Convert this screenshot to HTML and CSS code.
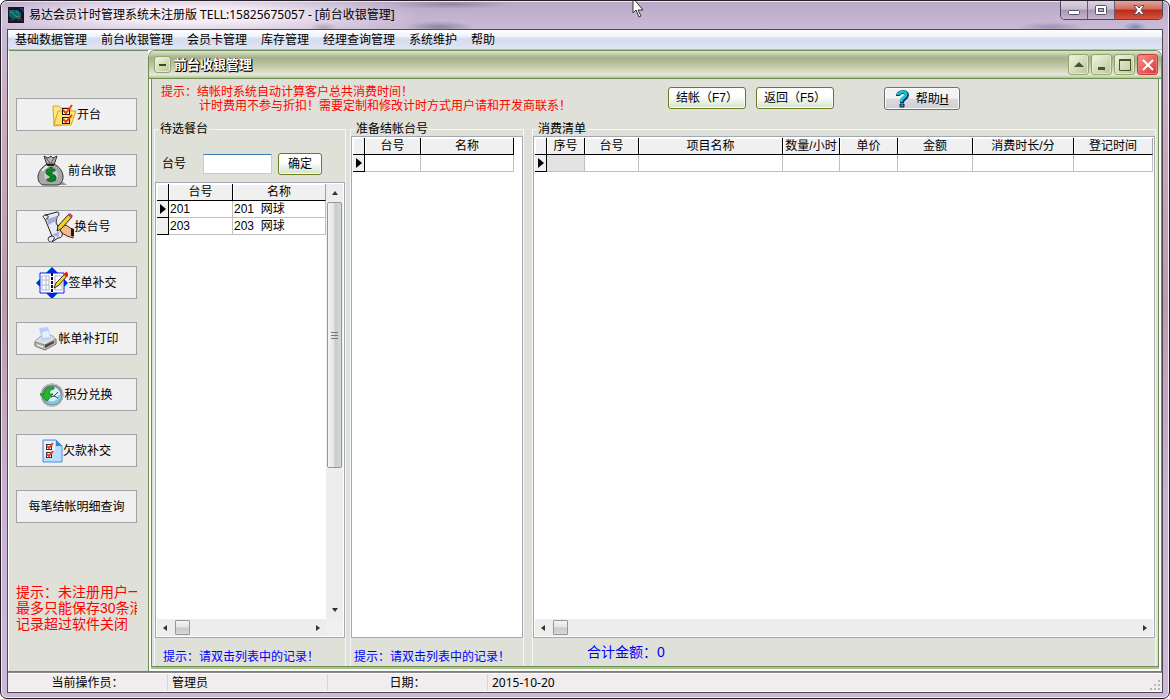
FILE: index.html
```html
<!DOCTYPE html>
<html lang="zh-CN">
<head>
<meta charset="utf-8">
<title>易达会员计时管理系统</title>
<link rel="stylesheet" href="styles.css">
</head>
<body>
<div class="frame">
  <header class="titlebar">
    <svg class="app-icon" width="16" height="16" viewBox="0 0 16 16"><rect width="16" height="16" fill="#17151d"/><path d="M1 3h9l3 3v6H4L1 9z" fill="#08616b"/><path d="M2 5l3 1 2 3 4 1M8 4l3 3" stroke="#2aa08a" fill="none"/><path d="M3 4h2M10 9h3" stroke="#c33"/><path d="M1 13h6M9 13h6" stroke="#62303a"/><path d="M12 2h3v3" stroke="#274fb0" fill="none"/></svg>
    <h1 class="app-title">易达会员计时管理系统未注册版 TELL:15825675057 - [前台收银管理]</h1>
    <div class="window-buttons">
      <button class="win-btn" aria-label="最小化"><svg width="14" height="12" viewBox="0 0 14 12"><rect x="1.500" y="6.500" width="11" height="4" rx="1" fill="#fff" stroke="#555566"/></svg></button>
      <button class="win-btn" aria-label="还原"><svg width="14" height="12" viewBox="0 0 14 12"><rect x="1.500" y="1.500" width="11" height="9" rx="1" fill="#fff" stroke="#555566"/><rect x="4.500" y="4.500" width="5" height="3" fill="#b8a8c4" stroke="#555566"/></svg></button>
      <button class="win-btn win-close" aria-label="关闭"><svg width="14" height="12" viewBox="0 0 14 12"><path d="M2 1.500h3l2 2.500 2-2.500h3L9 6l3 4.500H9L7 8l-2 2.500H2L5 6z" fill="#fff" stroke="#5b4a58"/></svg></button>
    </div>
  </header>

  <div class="client">
    <nav class="menu">
      <a href="#">基础数据管理</a><a href="#">前台收银管理</a><a href="#">会员卡管理</a><a href="#">库存管理</a><a href="#">经理查询管理</a><a href="#">系统维护</a><a href="#">帮助</a>
    </nav>

    <div class="workspace">
      <aside class="sidebar">
        <button class="side-btn"><svg width="25" height="24" viewBox="0 0 25 24"><path d="M1 3h6l2 2h10v16L2 23z" fill="#fbe68a" stroke="#d9a520"/><path d="M2 22L6 8h18l-5 14z" fill="#ffe36b" stroke="#d9a520"/><rect x="10.500" y="5.500" width="7" height="6" fill="#fff3d2" stroke="#111"/><rect x="10.500" y="14.500" width="7" height="6" fill="#fff3d2" stroke="#111"/><path d="M11 7l3 3 6-8M11 16l3 3 6-7" stroke="#f03a12" stroke-width="2" fill="none"/></svg><span>开台</span></button>
        <button class="side-btn"><svg width="31" height="32" viewBox="0 0 31 32"><path d="M6 30h24l-4-3H4z" fill="#9a9a9a"/><path d="M7 1l4 2 3-2 2 2 4-2-3 9h-7z" fill="#b4b4b4" stroke="#333"/><path d="M9 3l4 5M17 3l-3 5" stroke="#555"/><path d="M10 9h7c6 3 9 8 9 13 0 5-3 8-6 8H7c-4 0-6-4-6-8 0-5 4-10 9-13z" fill="#a8a8a8" stroke="#333"/><path d="M5 16c2-3 4-4 6-5" stroke="#eee" stroke-width="2" fill="none"/><path d="M10 10h7" stroke="#222" stroke-width="2"/><circle cx="14" cy="20" r="7" fill="#c9c9c9"/><path d="M18 16c-2-2-8-2-8 1 0 4 8 2 8 6 0 3-6 3-8 1M14 12v15" stroke="#045f18" stroke-width="3" fill="none"/><path d="M18 16c-2-2-8-2-8 1 0 4 8 2 8 6 0 3-6 3-8 1M14 13v13" stroke="#0c9d2c" fill="none"/></svg><span>前台收银</span></button>
        <button class="side-btn"><svg width="32" height="32" viewBox="0 0 32 32"><path d="M3 8C0 6 1 4 4 4L15 1c3 0 2 4 0 5l-1 6 6 10c1 3-1 5-4 5l-6 4c-3 1-5-3-3-5l3-1z" fill="#e9eaf8" stroke="#222"/><path d="M5 8l10-3-1 5-8 4M10 24l8-4-2 6" fill="#a9add0"/><path d="M3 4c4-1 4 4 1 4M10 25c3 0 3 4 0 5" stroke="#222" fill="none"/><path d="M17 17l7-3 7 5v8l-6-2-5-3z" fill="#f2b98c" stroke="#4b2a18"/><path d="M29 17l3 1v7h-3z" fill="#1a1a1a"/><path d="M15 20l1-5L27 3l3 3-11 12z" fill="#f5cf22" stroke="#222"/><path d="M27 3l3 3" stroke="#c33a8c" stroke-width="3"/></svg><span>换台号</span></button>
        <button class="side-btn"><svg width="32" height="32" viewBox="0 0 32 32"><path d="M16 0l7 7H9zM16 32l7-7H9zM0 16l7-7v14zM32 16l-7-7v14z" fill="#1020e8" stroke="#18c0d0"/><path d="M4 6h11l1 1 1-1h11v20H17l-1 1-1-1H4z" fill="#fff" stroke="#1020e8"/><path d="M6 9h7v14H6zM19 9h7v14h-7zM6 13h7M6 18h7M10 9v14M19 18h7" stroke="#aab4cc" fill="none"/><path d="M16 6v21" stroke="#112" stroke-width="2" stroke-dasharray="3 1"/><path d="M18 21l2-5L29 7l2 2-9 10z" fill="#f4dc18" stroke="#333"/><path d="M29 6l3 3" stroke="#d22" stroke-width="4"/></svg><span>签单补交</span></button>
        <button class="side-btn"><svg width="24" height="24" viewBox="0 0 24 24"><path d="M1 14l6-5 10-1 5 4v5l-11 6-10-4z" fill="#dedede" stroke="#a2a2a2"/><path d="M5 1l9-1 3 12-9 2z" fill="#b7ceff"/><path d="M8 5l6-1 2 6-7 1z" fill="#e8f0ff"/><path d="M1 15l10 3 11-6v5l-11 6-10-4z" fill="#b5b5b5" stroke="#888"/><path d="M11 18l9-4v2l-9 5z" fill="#444"/><path d="M3 18l6 2" stroke="#fff"/></svg><span>帐单补打印</span></button>
        <button class="side-btn"><svg width="24" height="24" viewBox="0 0 24 24"><circle cx="12" cy="12" r="10" fill="#d7eef8" stroke="#858b96" stroke-width="3"/><circle cx="12" cy="12" r="11" fill="none" stroke="#c5c8cf"/><path d="M20 12a8 8 0 0 1-13 6" stroke="#83c9e4" stroke-width="3" fill="none"/><path d="M14 4C8 3 4 6 4 11H0l7 7 6-7H9c0-3 2-5 5-5z" fill="#28b72c" stroke="#178020"/><path d="M11 14l3-1 4-4M14 13l4 2" stroke="#245" stroke-width="1" fill="none"/></svg><span>积分兑换</span></button>
        <button class="side-btn"><svg width="21" height="24" viewBox="0 0 21 24"><path d="M1 1h13l6 6v16H1z" fill="#b9dcff" stroke="#4c8fd6"/><path d="M2 2h11v9L2 18z" fill="#e6f3ff"/><path d="M14 1v6h6z" fill="#3f86d2"/><rect x="4.500" y="5.500" width="5" height="5" fill="#fff" stroke="#333"/><rect x="4.500" y="13.500" width="5" height="5" fill="#fff" stroke="#333"/><path d="M5 7l2 2 4-5M5 15l2 2 4-5" stroke="#f03c15" stroke-width="2" fill="none"/></svg><span>欠款补交</span></button>
        <button class="side-btn"><span>每笔结帐明细查询</span></button>
        <p class="trial-note">提示：未注册用户一<br>最多只能保存30条消<br>记录超过软件关闭</p>
      </aside>

      <main class="child">
        <div class="child-title">
          <button class="child-btn child-menu" aria-label="窗口菜单"><svg width="8" height="4" viewBox="0 0 8 4"><path d="M0 1h7v2H0z" fill="#3c4c20"/></svg></button>
          <h2>前台收银管理</h2>
          <button class="child-btn" aria-label="卷起"><svg width="12" height="12" viewBox="0 0 12 12"><path d="M1 8l5-5 5 5z" fill="#46552a"/></svg></button>
          <button class="child-btn" aria-label="最小化子窗口"><svg width="12" height="12" viewBox="0 0 12 12"><path d="M2 8h7v3H2z" fill="#46552a"/></svg></button>
          <button class="child-btn" aria-label="最大化子窗口"><svg width="12" height="12" viewBox="0 0 12 12"><path d="M.5 .5h11v11H.5z" fill="none" stroke="#46552a"/><path d="M0 0h12v2H0z" fill="#46552a"/></svg></button>
          <button class="child-btn child-close" aria-label="关闭子窗口"><svg width="14" height="14" viewBox="0 0 14 14"><path d="M2 2l10 10M12 2L2 12" stroke="#fff" stroke-width="2"/></svg></button>
        </div>

        <div class="child-body">
          <div class="toolbar">
            <p class="hint">提示：结帐时系统自动计算客户总共消费时间！<br><span class="hint-second">计时费用不参与折扣！需要定制和修改计时方式用户请和开发商联系！</span></p>
            <button class="olive-btn">结帐（F7）</button>
            <button class="olive-btn">返回（F5）</button>
            <button class="help-btn"><svg width="14" height="18" viewBox="0 0 14 18"><path d="M2 6c0-5 9-5 9-1 0 4-5 3-5 8" stroke="#102a55" stroke-width="4" fill="none"/><path d="M2 5c1-4 8-4 8-1 0 4-5 3-5 8" stroke="#10c4d4" stroke-width="3" fill="none"/><path d="M4 14h4v3H4z" fill="#0a9cb4" stroke="#102a55"/></svg><span>帮助<u>H</u></span></button>
          </div>

          <div class="groups">
            <fieldset class="group">
              <legend>待选餐台</legend>
              <div class="search">
                <label for="desk">台号</label>
                <input id="desk" type="text">
                <button class="olive-btn ok-btn">确定</button>
              </div>
              <div class="list both">
                <div class="view">
                  <table class="grid">
                    <colgroup><col class="w12"><col class="w64"><col></colgroup>
                    <thead><tr><th></th><th>台号</th><th>名称</th></tr></thead>
                    <tbody>
                      <tr><td class="mark current"></td><td>201</td><td>201&nbsp; 网球</td></tr>
                      <tr><td class="mark"></td><td>203</td><td>203&nbsp; 网球</td></tr>
                    </tbody>
                  </table>
                </div>
                <div class="vbar"><i class="arrow up"></i><i class="vthumb"></i><i class="arrow down"></i></div>
                <div class="hbar"><i class="arrow left"></i><i class="hthumb"></i><i class="arrow right"></i></div>
                <div class="corner"></div>
              </div>
              <p class="note">提示：请双击列表中的记录！</p>
            </fieldset>

            <fieldset class="group">
              <legend>准备结帐台号</legend>
              <div class="list">
                <div class="view narrow">
                  <table class="grid closed">
                    <colgroup><col class="w12"><col class="w56"><col></colgroup>
                    <thead><tr><th></th><th>台号</th><th>名称</th></tr></thead>
                    <tbody><tr><td class="mark current"></td><td></td><td></td></tr></tbody>
                  </table>
                </div>
              </div>
              <p class="note">提示：请双击列表中的记录！</p>
            </fieldset>

            <fieldset class="group bill">
              <legend>消费清单</legend>
              <div class="list horizontal">
                <div class="view">
                  <table class="grid">
                    <colgroup><col class="w12"><col class="w38"><col class="w54"><col class="w144"><col class="w57"><col class="w58"><col class="w75"><col class="w101"><col></colgroup>
                    <thead><tr><th></th><th>序号</th><th>台号</th><th>项目名称</th><th>数量/小时</th><th>单价</th><th>金额</th><th>消费时长/分</th><th>登记时间</th></tr></thead>
                    <tbody><tr><td class="mark current"></td><td class="focus"></td><td></td><td></td><td></td><td></td><td></td><td></td><td></td></tr></tbody>
                  </table>
                </div>
                <div class="hbar"><i class="arrow left"></i><i class="hthumb"></i><i class="arrow right"></i></div>
              </div>
              <p class="total">合计金额：<output>0</output></p>
            </fieldset>
          </div>
        </div>
      </main>
    </div>

    <footer class="status">
      <span class="cell centered">当前操作员：</span><span class="cell">管理员</span><span class="cell centered">日期：</span><span class="cell rest">2015-10-20</span>
      <svg width="12" height="12" viewBox="0 0 12 12"><path d="M8 1h2v2H8zM8 5h2v2H8zM4 5h2v2H4zM8 9h2v2H8zM4 9h2v2H4zM0 9h2v2H0z" fill="#b9b5b6"/></svg>
    </footer>
  </div>
  <svg class="pointer" width="13" height="18" viewBox="0 0 13 18"><path d="M1 -3v15l3-3 3 7 2-1-3-6h5z" fill="#fff" stroke="#333"/></svg>
</div>
</body>
</html>
```
FILE: styles.css
```css
* { box-sizing: border-box; }

body {
  margin: 0;
  background: #fff;
  font: 12px/14px "Liberation Sans", "Noto Sans CJK SC", sans-serif;
  color: #000;
}

button, input { font: inherit; color: inherit; padding: 0; margin: 0; }
h1, h2, p { margin: 0; font-size: 12px; font-weight: 400; }
svg { flex: none; display: block; }

.frame {
  position: relative;
  display: flex;
  flex-direction: column;
  height: 100vh;
  padding: 0 6px 5px;
  border: 1px solid #252028;
  border-radius: 7px;
  background:
    radial-gradient(ellipse 230px 24px at 190px 14px, #f5edf6 30%, transparent),
    radial-gradient(ellipse 36px 6px at 438px 26px, #8f849f, transparent),
    radial-gradient(ellipse 60px 5px at 450px 3px, #94859f, transparent),
    radial-gradient(ellipse 14px 5px at 322px 26px, #96808c, transparent),
    radial-gradient(ellipse 34px 5px at 1050px 26px, #a092b4, transparent),
    radial-gradient(ellipse 12px 5px at 1134px 26px, #8088b0, transparent),
    linear-gradient(#b9a8c8, #cabbd6 28px, #c8aec0 110px, #b99bae 300px, #c9b3cf 500px, #cdb9d6);
  box-shadow: inset 0 0 0 1px #efe6f2;
}

.titlebar { display: flex; height: 28px; padding-left: 1px; }
.app-icon { margin-top: 6px; }
.app-title { flex: 1; margin-left: 5px; line-height: 28px; font-family: "Noto Sans", "Noto Sans CJK SC", sans-serif; white-space: nowrap; }
.window-buttons { display: flex; height: 19px; border: 1px solid #514758; border-top: 0; border-radius: 0 0 5px 5px; overflow: hidden; }
.win-btn { display: grid; place-items: center; width: 27px; border: 0; border-right: 1px solid #665a70; background: linear-gradient(#ddd3e2, #c7b9d0 45%, #a797b2 50%, #c4b5cd); }
.win-close { width: 47px; border-right: 0; background: linear-gradient(#e7a496, #d06c5c 45%, #b82a18 50%, #d5543c); }

.client { flex: 1; display: flex; flex-direction: column; min-height: 0; border: 1px solid #4d4854; background: #fff; }

.menu { display: flex; gap: 14px; height: 20px; padding: 0 7px; background: linear-gradient(#fff, #eef2fa 35%, #d5dcee 45%, #dfe5f5); border-bottom: 1px solid #b4b9cc; }
.menu a { color: #000; text-decoration: none; line-height: 20px; font-size: 12px; white-space: nowrap; }

.workspace { flex: 1; display: flex; min-height: 0; border-bottom: 1px solid #6f8756; }

.sidebar { display: flex; flex-direction: column; gap: 23px; flex: none; width: 139px; padding: 47px 11px 0 7px; margin-left: 1px; background: #dfe0d8; border-top: 1px solid #71895a; overflow: hidden; }
.side-btn { display: flex; align-items: center; justify-content: center; flex: none; height: 33px; border: 1px solid #9fa3a7; background: #f0f0f0; white-space: nowrap; overflow: hidden; }
.trial-note { margin-top: 38px; font-size: 14px; line-height: 16px; color: #f00; white-space: nowrap; overflow: hidden; }

.child { flex: 1; display: flex; flex-direction: column; min-width: 0; border: 1px solid #6f8f52; border-bottom: 0; border-radius: 7px 7px 0 0; background: #fff; }
.child-title { display: flex; align-items: center; gap: 2px; flex: none; height: 28px; padding: 0 3px 0 5px; border-radius: 6px 6px 0 0; background: linear-gradient(#dfe5cf, #a5b088 25%, #c5ccae 60%, #e6e9d9 88%, #b4be9a); border-bottom: 1px solid #6f8f52; }
.child-title h2 { flex: 1; margin-left: 1px; font-size: 13px; font-weight: 700; line-height: 20px; color: #fff; text-shadow: 1px 1px 0 #000, 0 1px 0 #000, 1px 0 0 #000; }
.child-btn { display: grid; place-items: center; width: 21px; height: 21px; border: 1px solid #93a66f; border-radius: 3px; background: linear-gradient(135deg, #f2f5e4, #b9c596); box-shadow: inset 0 0 0 1px #e3eacd; }
.child-menu { width: 17px; height: 17px; }
.child-close { border-color: #c63c3c; background: linear-gradient(135deg, #f39a8c, #dd2f35); box-shadow: inset 0 0 0 1px #ef7c74; }

.child-body { flex: 1; display: flex; flex-direction: column; min-height: 0; margin: 0 2px 4px; padding: 0 2px; border: 1px solid #6f9152; border-top: 0; background: #dfe0d8; box-shadow: 0 2px 0 #a9c08f; }

.toolbar { display: flex; align-items: flex-start; gap: 10px; flex: none; height: 43px; padding: 8px 6px 0 7px; }
.hint { flex: 0 1 497px; margin-top: -2px; color: #f00; white-space: nowrap; }
.hint-second { padding-left: 38px; }
.olive-btn { flex: none; width: 78px; height: 22px; border: 1px solid #6c7c1c; border-radius: 3px; background: linear-gradient(#fff 40%, #d3e2cd); box-shadow: inset 0 0 0 1px #fbfdf6; white-space: nowrap; line-height: 18px; }
.help-btn { display: flex; align-items: center; justify-content: center; gap: 6px; flex: none; width: 76px; height: 23px; margin-left: 40px; border: 1px solid #707070; border-radius: 3px; background: linear-gradient(#f3f3f3 48%, #dcdce0 52%, #cfcfd3); box-shadow: inset 0 0 0 1px #fbfbfb; }

.groups { flex: 1; display: grid; grid-template-columns: 192px 174px 1fr; grid-template-rows: 100%; column-gap: 4px; min-height: 0; }
.group { display: flex; flex-direction: column; min-width: 0; margin: 0; padding: 0; border: 1px solid #f2f7fa; border-bottom: 0; }
.bill { margin-left: 4px; }
.group legend { margin-left: 4px; padding: 0 1px; line-height: 14px; height: 14px; }
.search { display: flex; align-items: center; flex: none; height: 46px; padding: 10px 0 0 7px; }
.search label { width: 41px; }
.search input { width: 69px; height: 20px; border: 1px solid #b5cfe7; border-top-color: #3d7bad; background: #fff; }
.ok-btn { width: 44px; margin-left: 6px; }

.list { flex: 1; display: grid; grid-template: minmax(0, 1fr) / minmax(0, 1fr); min-height: 0; padding: 1px; border: 1px solid #a3a8b4; background: #fff; }
.both { grid-template: minmax(0, 1fr) 17px / minmax(0, 1fr) 17px; }
.horizontal { grid-template: minmax(0, 1fr) 17px / minmax(0, 1fr); }
.view { overflow: hidden; }
.narrow { padding-right: 7px; }

.grid { width: 100%; table-layout: fixed; border-collapse: separate; border-spacing: 0; }
.grid th { height: 17px; padding: 0; font-weight: 400; line-height: 16px; border-right: 1px solid #000; border-bottom: 1px solid #000; background: #f0f0f0; box-shadow: inset 1px 1px 0 #fff; white-space: nowrap; overflow: hidden; }
.grid th:last-child { border-right-color: #a0a0a0; }
.closed th:last-child { border-right-color: #000; }
.grid td { height: 17px; padding: 0 0 0 1px; line-height: 16px; border-right: 1px solid #c0c0c0; border-bottom: 1px solid #c0c0c0; white-space: nowrap; }
.grid td.mark { padding: 0; background: #f0f0f0; border-color: #000; }
.grid td.focus { background: #e3e3e3; }
.mark.current::before { content: ""; display: block; width: 0; margin-left: 3px; border: 5px solid transparent; border-left: 6px solid #000; border-right: 0; }
.w12 { width: 12px; } .w38 { width: 38px; } .w54 { width: 54px; } .w56 { width: 56px; } .w57 { width: 57px; }
.w58 { width: 58px; } .w64 { width: 64px; } .w75 { width: 75px; } .w101 { width: 101px; } .w144 { width: 144px; }

.vbar, .hbar { display: flex; align-items: center; background: #ededed; }
.vbar { flex-direction: column; padding: 7px 0; }
.hbar { padding: 0 6px; }
.corner { background: #f0f0f0; }
.arrow { width: 0; height: 0; border: 3px solid transparent; }
.up { border-top: 0; border-bottom: 4px solid #333; }
.down { border-bottom: 0; border-top: 4px solid #333; margin-top: auto; }
.left { border-left: 0; border-right: 4px solid #333; }
.right { border-right: 0; border-left: 4px solid #333; margin-left: auto; }
.vthumb { flex: 0 1 266px; width: 15px; margin-top: 7px; border: 1px solid #979797; border-radius: 2px; background: linear-gradient(#777 1px, transparent 1px 3px, #777 3px 4px, transparent 4px 6px, #777 6px 7px, transparent 7px) center / 7px 7px no-repeat, linear-gradient(90deg, #f5f5f5, #e4e4e5 45%, #c9cacc 55%, #d8d8da); }
.hthumb { width: 15px; height: 15px; margin-left: 8px; border: 1px solid #979797; border-radius: 1px; background: linear-gradient(#f5f5f5, #e4e4e5 45%, #c9cacc 55%, #d8d8da); }

.note { flex: none; height: 28px; padding: 12px 0 0 8px; color: #00f; white-space: nowrap; }
.group + .group .note { padding-left: 3px; }
.total { flex: none; height: 28px; padding: 7px 0 0 54px; font-size: 14px; color: #00f; }

.status { display: flex; align-items: flex-end; flex: none; height: 20px; border-top: 1px solid #8a8a8a; border-bottom: 1px solid #fff; background: #f1edee; box-shadow: inset 0 1px 0 #fff; }
.cell { width: 160px; padding-left: 4px; border-right: 1px solid #d8d4d5; line-height: 17px; font-family: "Noto Sans", "Noto Sans CJK SC", sans-serif; }
.centered { text-align: center; padding-left: 0; }
.rest { flex: 1; border-right: 0; }

.pointer { position: absolute; left: 631px; top: 0; }
```
